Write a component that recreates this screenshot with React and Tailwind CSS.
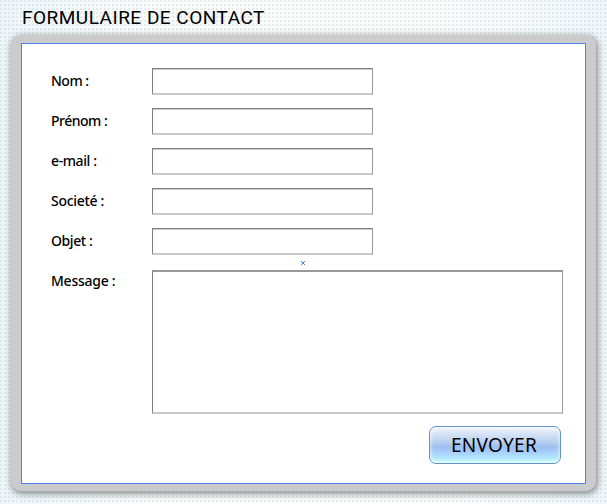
import React from "react";

const fields = [
  { id: "nom", label: "Nom :", spacing: "tracking-[-0.5px]" },
  { id: "prenom", label: "Prénom :", spacing: "tracking-[-0.5px]" },
  { id: "email", label: "e-mail :", spacing: "tracking-[-0.4px]" },
  { id: "societe", label: "Societé :", spacing: "tracking-[-0.3px]" },
  { id: "objet", label: "Objet :", spacing: "tracking-[-0.4px]" },
];

const App = () => {
  return (
    <div className="h-[504px] w-[607px] overflow-hidden bg-[url('data:image/svg+xml,%3Csvg%20xmlns=%22http://www.w3.org/2000/svg%22%20width=%224%22%20height=%224%22%3E%3Cpath%20fill=%22%23bdc9cc%22%20fill-opacity=%22.33%22%20d=%22M0%200h2v2H0z%22/%3E%3C/svg%3E'),linear-gradient(to_right,#eef6fa,#fafbfb_25%,#fafbfb_75%,#f0f7fb)] pl-[11px] font-['Noto_Sans',sans-serif] text-black">
      <h1 className="h-[35px] pl-[11px] pt-[4px] font-['Roboto',sans-serif] text-[19px] leading-[27px] tracking-[0.5px]">
        FORMULAIRE DE CONTACT
      </h1>
      <div className="h-[456px] w-[585px] rounded-[10px] bg-[#cbcbcb] pl-[10px] pt-[8px] shadow-[1px_2px_6px_1px_rgba(70,80,80,0.6)]">
        <form
          className="h-[441px] w-[565px] border border-[#4f80f0] bg-white pl-[29px] pt-[24px]"
          onSubmit={(e) => e.preventDefault()}
        >
          {fields.map((field) => (
            <div key={field.id} className="flex h-[40px]">
              <label
                htmlFor={field.id}
                className={`w-[101px] text-[14px] font-medium leading-[25px] ${field.spacing}`}
              >
                {field.label}
              </label>
              <input
                id={field.id}
                type="text"
                className="h-[27px] w-[221px] border border-b-2 border-[#808080] border-b-[#c8c8c8] border-r-[#999] bg-white px-1 text-sm shadow-[inset_0_1px_0_#cccccc] outline-none"
              />
            </div>
          ))}
          <div className="flex h-[158px]">
            <label
              htmlFor="message"
              className="w-[101px] text-[14px] font-medium leading-[25px] tracking-[-0.25px]"
            >
              Message :
            </label>
            <div className="relative pt-[2px]">
              <textarea
                id="message"
                className="block h-[144px] w-[411px] resize-none border border-y-2 border-[#808080] border-b-[#c8c8c8] border-r-[#999] border-t-[#999] bg-white p-1 text-sm outline-none"
              />
              <svg
                className="absolute left-[149px] top-[-7px]"
                width="4"
                height="4"
                viewBox="0 0 4 4"
                shapeRendering="crispEdges"
              >
                <path d="M0 0h1v1H0zM3 0h1v1H3zM1 1h2v2H1zM0 3h1v1H0zM3 3h1v1H3z" fill="#4f80f0" />
              </svg>
            </div>
          </div>
          <button
            type="submit"
            className="ml-[378px] block h-[38px] w-[132px] rounded-[7px] border border-[#6792c5] bg-[linear-gradient(to_bottom,#eef4fd_0%,#d3e1f5_22%,#b8cff0_42%,#9cc0f0_55%,#a8cefc_70%,#b5eaff_88%,#c5ffff_100%)] pr-[2px] text-[19px] leading-[33px] tracking-[0.3px] shadow-[inset_0_0_4px_#ffffff]"
          >
            ENVOYER
          </button>
        </form>
      </div>
    </div>
  );
};

export default App;
